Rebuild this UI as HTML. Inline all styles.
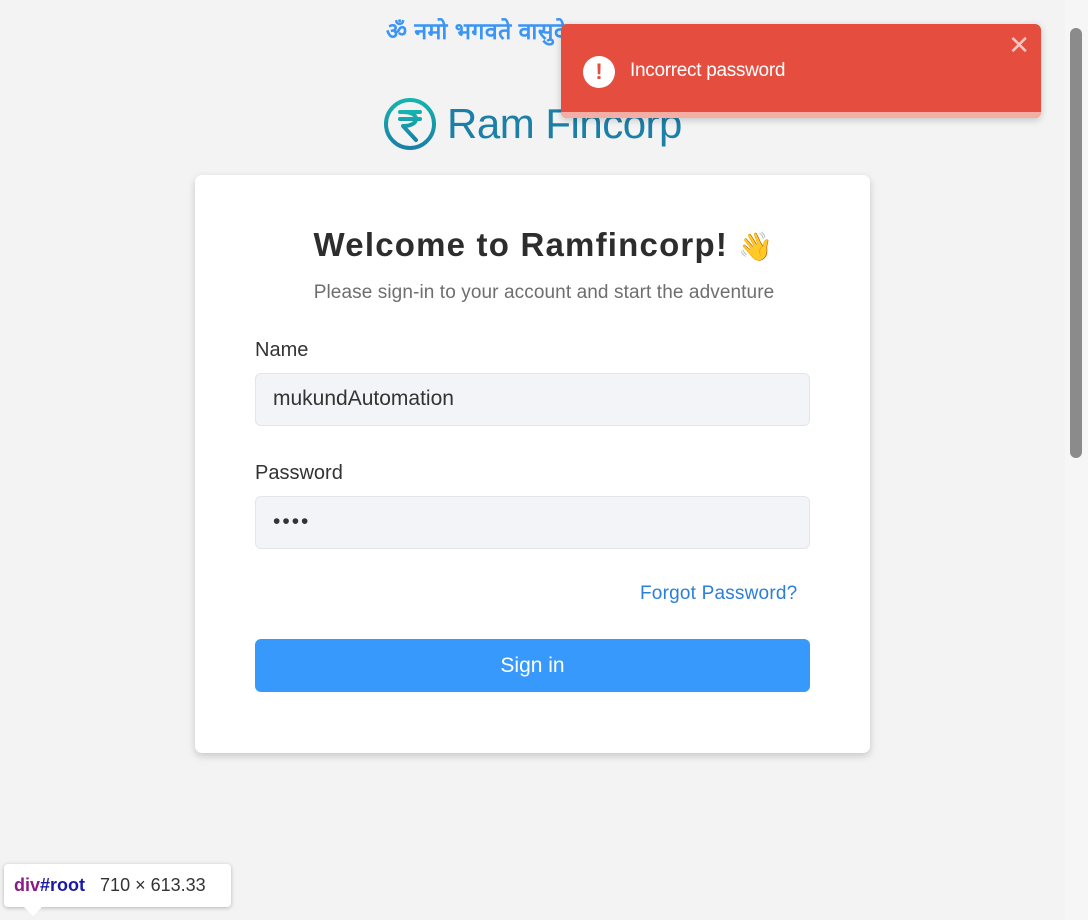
<!DOCTYPE html>
<html><head><meta charset="utf-8"><style>
html,body{margin:0;padding:0;overflow:hidden}
body{width:1088px;height:920px;background:#f3f3f3;font-family:"Liberation Sans",sans-serif;position:relative;overflow:hidden}
.om{position:absolute;left:386px;top:14px;font-family:"Liberation Sans","Noto Sans CJK SC",sans-serif;font-weight:bold;font-size:23px;letter-spacing:0.5px;color:#3b95f5;white-space:nowrap}
.logo{position:absolute;left:383px;top:97px;display:flex;align-items:center}
.logo .t{font-size:42px;color:#1b7fa8;margin-left:10px;letter-spacing:-0.5px;line-height:1}
.card{position:absolute;left:195px;top:175px;width:675px;height:578px;background:#fff;border-radius:7px;box-shadow:0 3px 8px rgba(0,0,0,.18)}
h1{position:absolute;left:0;right:0;top:226px;margin:0;text-align:center;font-size:33px;letter-spacing:1.2px;font-weight:bold;color:#2d2d2d;white-space:nowrap}
.sub{position:absolute;left:0;right:0;top:282px;text-align:center;font-size:19px;letter-spacing:0.1px;color:#6e6e6e}
.lbl{position:absolute;left:255px;font-size:20px;color:#333}
.inp{position:absolute;left:255px;width:555px;height:53px;background:#f3f4f7;border:1px solid #e3e5e9;border-radius:6px;font-size:21px;color:#333;box-sizing:border-box;padding:13px 17px}
.fp{position:absolute;left:640px;top:583px;font-size:19px;letter-spacing:0.2px;color:#2b7fd8}
.btn{position:absolute;left:255px;top:639px;width:555px;height:53px;background:#3899fc;border-radius:6px;color:#fff;font-size:21px;text-align:center;line-height:53px}
.toast{position:absolute;left:561px;top:24px;width:480px;height:94px;background:#e54e3f;border-radius:6px;overflow:hidden;box-shadow:0 2px 8px rgba(0,0,0,.2)}
.toast .bar{position:absolute;left:0;bottom:0;width:100%;height:6px;background:#f3aea5}
.toast .ic{position:absolute;left:22px;top:32px;width:32px;height:32px;border-radius:50%;background:#fff;color:#e54e3f;font-weight:bold;font-size:22px;text-align:center;line-height:32px}
.toast .msg{position:absolute;left:69px;top:36px;color:#fff;font-size:19px;letter-spacing:-0.3px}
.toast .x{position:absolute;right:11px;top:6px;color:#f7c6c0;font-size:26px}
.sb{position:absolute;right:0;top:0;width:23px;height:920px;background:#f6f6f6}
.thumb{position:absolute;left:1070px;top:28px;width:12px;height:430px;background:#8b8b8b;border-radius:6px}
.tip{position:absolute;left:4px;top:864px;width:227px;height:43px;background:#fff;border-radius:4px;box-shadow:0 1px 4px rgba(0,0,0,.25);font-family:"Liberation Sans",sans-serif;font-size:18px;line-height:43px;white-space:nowrap}
.tip:after{content:"";position:absolute;left:20px;bottom:-9px;border:9px solid transparent;border-top-color:#fff;border-bottom:0}
</style></head><body>
<div class="om">ॐ नमो भगवते वासुदेवाय नमः</div>
<div class="logo">
<svg width="54" height="54" viewBox="0 0 54 54"><defs><linearGradient id="g" x1="0" y1="0" x2="0" y2="1"><stop offset="0" stop-color="#16b3ad"/><stop offset="1" stop-color="#1a7fa8"/></linearGradient></defs><circle cx="27" cy="27" r="24" fill="none" stroke="url(#g)" stroke-width="4"/><path d="M17 15h20M17 22h20M19 15c10 0 14 3 14 7s-5 7-13 7l13 14" fill="none" stroke="url(#g)" stroke-width="4" stroke-linecap="round" stroke-linejoin="round"/></svg>
<span class="t">Ram Fincorp</span></div>
<div class="card"></div>
<h1>Welcome to Ramfincorp! <span style="font-size:28px">👋</span></h1>
<div class="sub">Please sign-in to your account and start the adventure</div>
<div class="lbl" style="top:339px">Name</div>
<div class="inp" style="top:373px">mukundAutomation</div>
<div class="lbl" style="top:462px">Password</div>
<div class="inp" style="top:496px;letter-spacing:2px">••••</div>
<div class="fp">Forgot Password?</div>
<div class="btn">Sign in</div>
<div class="toast"><div class="ic">!</div><div class="msg">Incorrect password</div><div class="x">✕</div><div class="bar"></div></div>
<div class="sb"></div><div class="thumb"></div>
<div class="tip">&nbsp;&nbsp;<b style="color:#8a1a8a">div</b><b style="color:#1a1aa6">#root</b>&nbsp;&nbsp;&nbsp;<span style="color:#333">710 × 613.33</span></div>
</body></html>
